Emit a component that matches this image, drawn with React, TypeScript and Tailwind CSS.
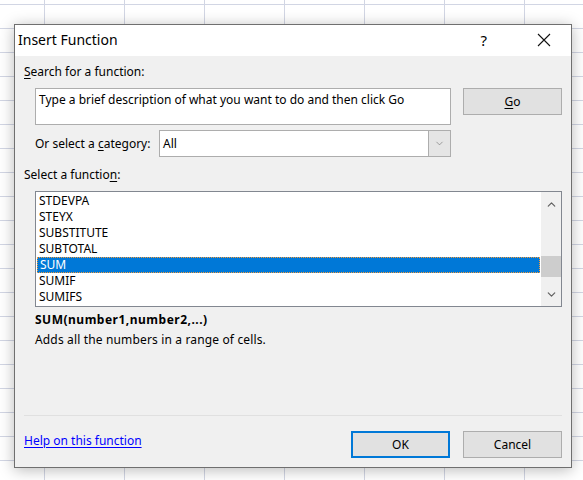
import { ChevronDown, ChevronUp } from "lucide-react";

const FUNCS = ["STDEVPA", "STEYX", "SUBSTITUTE", "SUBTOTAL", "SUM", "SUMIF", "SUMIFS"];

function CloseIcon() {
  return (
    <svg width="14" height="14" viewBox="0 0 14 14" className="block">
      <path d="M1 1 L13 13 M13 1 L1 13" stroke="#111" strokeWidth="1.1" fill="none" />
    </svg>
  );
}

function Btn({ children, focused }: { children: React.ReactNode; focused?: boolean }) {
  return (
    <div
      className={`w-[99px] h-[27px] flex items-center justify-center bg-[#e1e1e1] ${
        focused ? "border-2 border-[#0078d7]" : "border border-[#adadad]"
      }`}
    >
      {children}
    </div>
  );
}

export default function App() {
  return (
    <div
      className="relative w-[583px] h-[480px] overflow-hidden bg-white bg-[linear-gradient(to_right,#d2d6e4_1px,transparent_1px),linear-gradient(to_bottom,#d2d6e4_1px,transparent_1px)] bg-[length:80px_24px] bg-[position:44px_4px] text-[12px] leading-4 text-black font-['Segoe_UI','Noto_Sans',sans-serif]"
    >
      {/* dialog window */}
      <div className="absolute left-[14px] top-[24px] w-[558px] h-[444px] border border-[#6f6f6f] bg-[#f0f0f0] shadow-[0_2px_14px_rgba(0,0,0,0.28)] flex flex-col">
        {/* title bar */}
        <div className="h-[31px] bg-white flex items-center pl-[3px] pb-[2px] shrink-0">
          <span className="text-[14px] leading-5">Insert Function</span>
          <span className="ml-auto mr-[50px] text-[15px] leading-5">?</span>
          <span className="mr-[20px]">
            <CloseIcon />
          </span>
        </div>

        {/* body */}
        <div className="flex flex-col px-[9px] flex-1">
          <div className="mt-2 h-4">
            <span className="underline underline-offset-2">S</span>earch for a function:
          </div>

          <div className="mt-2 flex items-start">
            <div className="ml-[11px] w-[416px] h-[37px] border border-[#adadad] bg-white px-[3px] pt-[3px]">
              Type a brief description of what you want to do and then click Go
            </div>
            <div className="ml-auto">
              <Btn>
                <span>
                  <span className="underline underline-offset-2">G</span>o
                </span>
              </Btn>
            </div>
          </div>

          <div className="mt-[5px] flex items-center">
            <div className="ml-[11px] w-[124px]">
              Or select a <span className="underline underline-offset-2">c</span>ategory:
            </div>
            <div className="w-[292px] h-[27px] border border-[#adadad] bg-white flex items-center">
              <span className="pl-[3px] flex-1">All</span>
              <div className="w-[22px] h-full bg-[#e5e5e5] border-l border-[#adadad] flex items-center justify-center">
                <ChevronDown size={11} strokeWidth={1.2} color="#606060" />
              </div>
            </div>
          </div>

          <div className="mt-[10px] h-4">
            Select a functio<span className="underline underline-offset-2">n</span>:
          </div>

          <div className="mt-2 ml-[11px] h-[116px] border border-[#828790] bg-white flex">
            <div className="flex-1 flex flex-col pt-[1px] pl-[1px] pr-[1px]">
              {FUNCS.map((f) => (
                <div
                  key={f}
                  className={`h-4 pl-[2px] ${
                    f === "SUM"
                      ? "bg-[#0078d7] text-white border border-dotted border-[#f29a3a] leading-[14px] pl-[1px]"
                      : ""
                  }`}
                >
                  {f}
                </div>
              ))}
            </div>
            <div className="w-[20px] bg-[#f0f0f0] flex flex-col items-center">
              <div className="h-[24px] flex items-center justify-center">
                <ChevronUp size={13} strokeWidth={2.2} color="#606060" />
              </div>
              <div className="flex-1 w-full pt-[40px]">
                <div className="h-[21px] w-full bg-[#cdcdcd]" />
              </div>
              <div className="h-[24px] flex items-center justify-center">
                <ChevronDown size={13} strokeWidth={2.2} color="#606060" />
              </div>
            </div>
          </div>

          <div className="mt-[5px] ml-[11px] h-4 font-bold tracking-[0.5px]">SUM(number1,number2,...)</div>
          <div className="mt-1 ml-[11px] h-4 tracking-[0.15px]">Adds all the numbers in a range of cells.</div>

          <div className="mt-[67px] h-px bg-[#e0e0e0]" />

          <div className="mt-[15px] flex items-start">
            <a className="mt-[2px] text-[#0000ff] underline underline-offset-2">Help on this function</a>
            <div className="ml-auto flex gap-[13px]">
              <Btn focused>OK</Btn>
              <Btn>Cancel</Btn>
            </div>
          </div>
        </div>
      </div>
    </div>
  );
}
